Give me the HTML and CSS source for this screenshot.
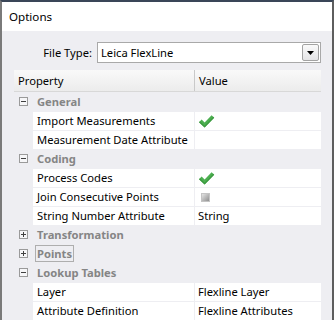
FILE: index.html
```html
<!DOCTYPE html>
<html>
<head>
<meta charset="utf-8">
<link rel="stylesheet" href="styles.css">
</head>
<body>
<div class="window">
  <div class="titlebar">Options</div>
  <div class="content">
    <div class="filetype">
      <div class="ft-label">File Type:</div>
      <div class="select">
        <span class="select-text">Leica FlexLine</span>
        <span class="select-btn"><svg width="7" height="4" viewBox="0 0 7 4"><polygon points="0,0 7,0 3.5,4" fill="#000"/></svg></span>
      </div>
    </div>
    <div class="grid">
      <div class="grid-head"><div class="h-prop">Property</div><div class="h-val">Value</div></div>

      <div class="cat"><span class="exp"><span class="bar"></span></span><span class="cat-name">General</span></div>
      <div class="row"><div class="p">Import Measurements</div><div class="v"><svg class="check" width="17" height="15" viewBox="0 0 17 15"><path d="M1 8.2 L3.6 5.6 L6.6 8.6 L13.6 1.2 L16.2 3.8 L6.6 13.6 Z" fill="#4caf50"/><path d="M6.6 13.6 L16.2 3.8 L15.2 2.8 L6.6 11.8 L2 7.2 L1 8.2 Z" fill="#3d9a41"/></svg></div></div>
      <div class="row"><div class="p">Measurement Date Attribute</div><div class="v"></div></div>

      <div class="cat"><span class="exp"><span class="bar"></span></span><span class="cat-name">Coding</span></div>
      <div class="row"><div class="p">Process Codes</div><div class="v"><svg class="check" width="17" height="15" viewBox="0 0 17 15"><path d="M1 8.2 L3.6 5.6 L6.6 8.6 L13.6 1.2 L16.2 3.8 L6.6 13.6 Z" fill="#4caf50"/><path d="M6.6 13.6 L16.2 3.8 L15.2 2.8 L6.6 11.8 L2 7.2 L1 8.2 Z" fill="#3d9a41"/></svg></div></div>
      <div class="row"><div class="p">Join Consecutive Points</div><div class="v"><span class="indet"></span></div></div>
      <div class="row"><div class="p">String Number Attribute</div><div class="v">String</div></div>

      <div class="cat"><span class="exp"><span class="bar"></span><span class="vbar"></span></span><span class="cat-name">Transformation</span></div>
      <div class="cat"><span class="exp"><span class="bar"></span><span class="vbar"></span></span><span class="cat-name focus">Points</span></div>
      <div class="cat"><span class="exp"><span class="bar"></span></span><span class="cat-name">Lookup Tables</span></div>
      <div class="row"><div class="p">Layer</div><div class="v">Flexline Layer</div></div>
      <div class="row"><div class="p">Attribute Definition</div><div class="v">Flexline Attributes</div></div>
    </div>
  </div>
</div>
</body>
</html>
```
FILE: styles.css
```css
html, body {
  margin: 0;
  padding: 0;
  background: #3c4656;
}
body {
  font-family: "Noto Sans", "Open Sans", sans-serif;
  font-size: 11.2px;
  color: #000;
}
.window {
  width: 334px;
  height: 320px;
  box-sizing: border-box;
  border-top: 2px solid #3a4658;
  border-left: 2px solid #7a7a7a;
  border-right: 2px solid #5e5e5e;
  overflow: hidden;
  background: #eeeef2;
}
.titlebar {
  height: 29px;
  box-sizing: border-box;
  background: #fff;
  padding-left: 7px;
  line-height: 29px;
  font-size: 11.6px;
}
.content {
  padding: 11px 11px 0 12px;
}
.filetype {
  display: flex;
  align-items: center;
  height: 21px;
  margin-bottom: 7px;
}
.ft-label {
  width: 78px;
  margin-right: 5px;
  text-align: right;
}
.select {
  flex: 1;
  height: 21px;
  box-sizing: border-box;
  border: 1px solid #a9a9a9;
  background: #fff;
  display: flex;
  align-items: center;
  justify-content: space-between;
}
.select-text {
  padding-left: 3px;
}
.select-btn {
  width: 17px;
  height: 17px;
  box-sizing: border-box;
  margin-right: 1px;
  border: 1px solid #a3a3a3;
  border-radius: 2px;
  background: linear-gradient(#fafafa, #e4e4e6);
  display: flex;
  align-items: center;
  justify-content: center;
}
.grid {
  width: 307px;
}
.grid-head {
  display: flex;
  height: 22px;
  box-sizing: border-box;
  background: linear-gradient(#f9f9f9, #ececec);
  border-bottom: 1px solid #d8d8d8;
}
.h-prop {
  width: 181px;
  padding-left: 4px;
  box-sizing: border-box;
  border-right: 1px solid #c9c9c9;
  line-height: 21px;
}
.h-val {
  padding-left: 4px;
  line-height: 21px;
}
.cat {
  height: 19px;
  display: flex;
  align-items: center;
}
.exp {
  width: 9px;
  height: 9px;
  box-sizing: border-box;
  border: 1px solid #9a9a9a;
  background: #f6f6f8;
  margin-left: 5px;
  margin-right: 7px;
  position: relative;
}
.exp .bar {
  position: absolute;
  left: 1px;
  top: 3px;
  width: 5px;
  height: 1px;
  background: #404040;
}
.exp .vbar {
  position: absolute;
  left: 3px;
  top: 1px;
  width: 1px;
  height: 5px;
  background: #404040;
}
.cat-name {
  font-weight: bold;
  color: #858585;
  line-height: 15px;
  padding: 0 1px;
  border: 1px solid transparent;
}
.cat-name.focus {
  border-color: #aeaeae;
}
.row {
  height: 19px;
  box-sizing: border-box;
  padding-top: 1px;
  padding-left: 19px;
  display: flex;
}
.p {
  width: 161px;
  height: 18px;
  background: #fff;
  padding-left: 4px;
  box-sizing: border-box;
  line-height: 18px;
  white-space: nowrap;
  overflow: hidden;
  margin-right: 1px;
}
.v {
  flex: 1;
  height: 18px;
  background: #fff;
  padding-left: 3px;
  line-height: 18px;
  display: flex;
  align-items: center;
  white-space: nowrap;
}
.check {
  display: block;
}
.indet {
  width: 9px;
  height: 9px;
  margin-left: 3px;
  box-sizing: border-box;
  border: 1px solid #c4c4c4;
  background: linear-gradient(135deg, #e4e4e4, #8f8f8f);
}
```
